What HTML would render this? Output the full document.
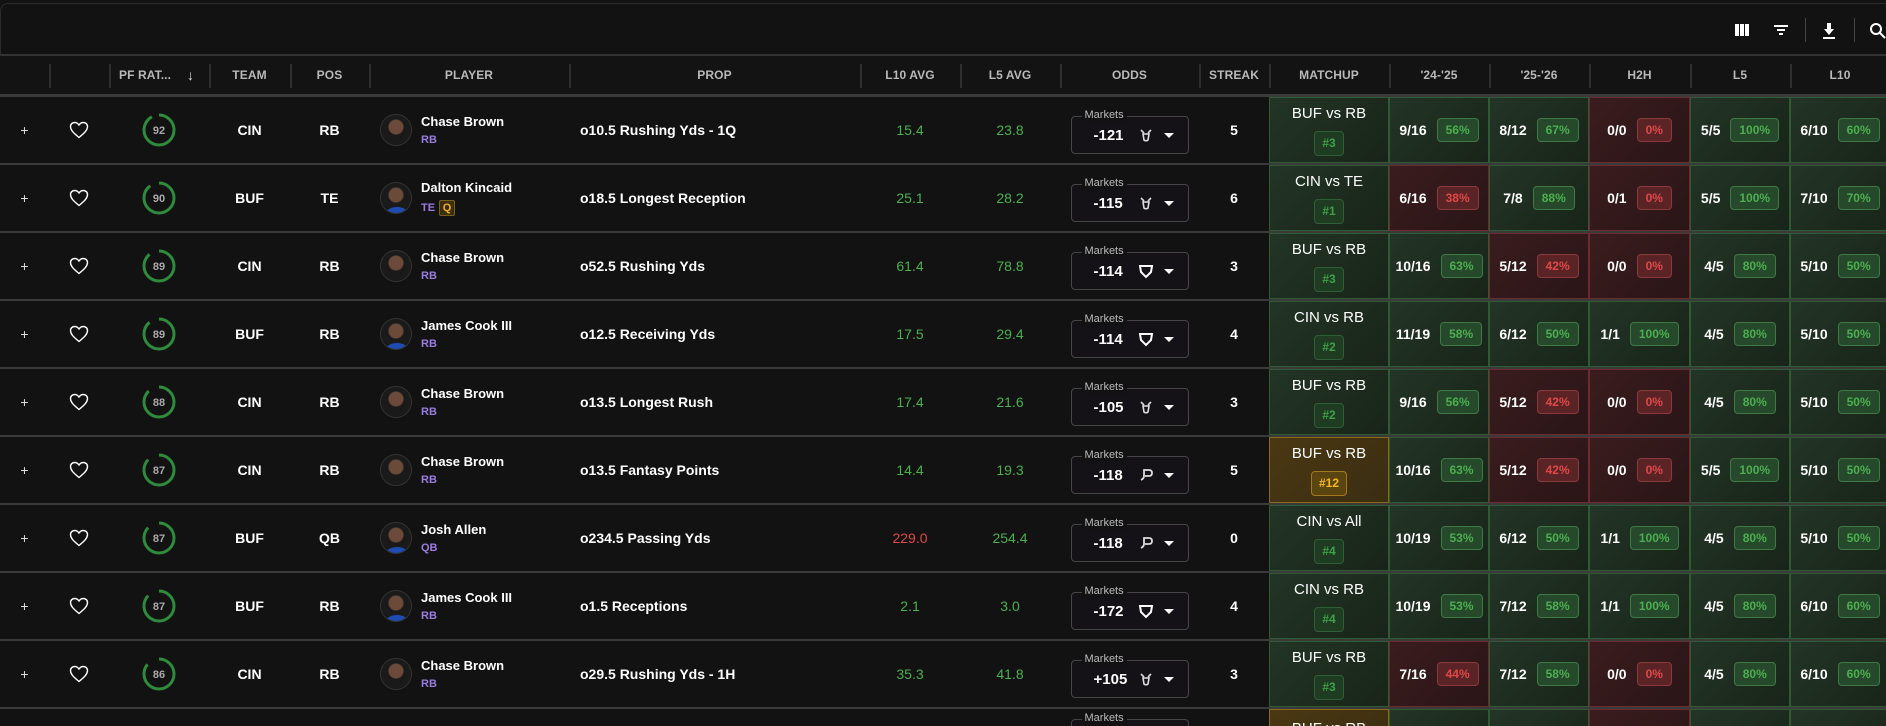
<!DOCTYPE html>
<html style="width:1886px;height:726px;overflow:hidden"><head><meta charset="utf-8"><style>
*{box-sizing:border-box;margin:0;padding:0}
body{width:1886px;height:726px;overflow:hidden;background:#121212;font-family:"Liberation Sans",sans-serif;color:#fff;position:relative}
.top{position:absolute;left:0;top:3px;width:1900px;height:53px;border:1px solid #2c2c2c;border-bottom:2px solid #333;border-radius:8px 8px 0 0;background:#121212}
.ic{position:absolute;top:18px}
.hdr{position:absolute;left:0;top:56px;width:1886px;height:41px;border-bottom:3px solid #3a3a3a;background:#131313}
.hdr div{position:absolute;top:0;height:38px;line-height:38px;text-align:center;font-size:12px;font-weight:bold;color:#b9b9b9;letter-spacing:0.1px}
.hdr i{position:absolute;top:8px;width:2px;height:24px;background:#2e2e2e}
.row{position:absolute;left:0;width:1886px;height:68px;border-bottom:2px solid #3a3a3a;background:#121212}
.row>div{position:absolute;top:0;height:66px;display:flex;align-items:center;justify-content:center;font-size:14px;font-weight:bold}
.c0{left:0;width:49px}.c1{left:49px;width:60px}.c2{left:109px;width:100px}.c3{left:209px;width:81px}.c4{left:290px;width:79px}
.c5{left:369px;width:200px;justify-content:flex-start!important}
.c6{left:569px;width:291px;justify-content:flex-start!important;padding-left:11px}
.c7{left:860px;width:100px}.c8{left:960px;width:100px}.c9{left:1060px;width:139px}.c10{left:1199px;width:70px}
.c11{left:1269px;width:120px}.c12{left:1389px;width:100px}.c13{left:1489px;width:100px}.c14{left:1589px;width:101px}.c15{left:1690px;width:100px}.c16{left:1790px;width:100px}
.avg{color:#4caf50!important;font-weight:normal!important;font-size:14px}
.red{color:#e04848!important}
.av{width:32px;height:32px;border-radius:50%;background:radial-gradient(circle at 50% 40%,#6b4a3a 0 7px,#1a1a1a 8px);border:1px solid #333;margin-left:11px;margin-right:9px;flex:none;position:relative;overflow:hidden}
.av.b::after{content:"";position:absolute;left:6px;bottom:-4px;width:20px;height:10px;border-radius:50%;background:#1f4cb0}
.nm{font-size:13px;font-weight:bold;line-height:16px}
.ps{font-size:11px;color:#9a7be0;font-weight:bold;margin-top:4px;display:flex;align-items:center}
.q{display:inline-block;margin-left:4px;width:16px;height:16px;line-height:14px;text-align:center;border:1px solid #7a5f1a;background:#3b2e0e;color:#f0b020;border-radius:2px;font-size:11px}
.odds{position:relative;width:118px;height:38px;border:1px solid #454545;border-radius:4px;background:#141216;margin-top:10px}
.odds .lb{position:absolute;left:10px;top:-8px;background:#121212;padding:0 3px;font-size:11px;color:#bbb;font-weight:normal;line-height:13px}
.odds .v{position:absolute;left:22px;top:10px;font-size:15px;font-weight:bold}
.odds .bk{position:absolute;left:66px;top:10px}
.odds .cr{position:absolute;left:92px;top:16px;width:0;height:0;border-left:5px solid transparent;border-right:5px solid transparent;border-top:5px solid #fff}
.g{background:linear-gradient(135deg,#233526,#182419);border:1px solid #2f5a33}
.r{background:linear-gradient(135deg,#3a1c1e,#2a1517);border:1px solid #6a2a2e}
.y{background:linear-gradient(135deg,#4a3812,#3a2d12);border:1px solid #8a6a1a}
.st{gap:10px;font-size:14px}
.pl{font-size:12px;font-weight:bold;padding:0 8px;height:24px;line-height:22px;border-radius:4px}
.pg{background:#26482b;border:1px solid #3f7a46;color:#4caf50}
.pr{background:#5a2427;border:1px solid #8a3a3f;color:#e04848}
.mu{flex-direction:column;font-weight:normal!important}
.mu span{font-size:15px;margin-top:0}
.bd{margin-top:9px;height:25px;line-height:23px;padding:0 7px;font-size:12px;font-weight:bold;border-radius:4px;background:#1f3c23;border:1px solid #2f5f34;color:#3fa048}
.bd.yb{background:#5a4410;border-color:#a07a20;color:#f5b820}
.plus{font-size:23px;font-weight:normal!important;color:#ddd}
</style></head><body>
<div class="top">
<svg class="ic" style="left:1733px" width="16" height="16" viewBox="0 0 16 16"><rect x="1" y="2" width="4" height="12" fill="#fff"/><rect x="6" y="2" width="4" height="12" fill="#fff"/><rect x="11" y="2" width="4" height="12" fill="#fff"/></svg>
<svg class="ic" style="left:1772px" width="16" height="16" viewBox="0 0 16 16"><rect x="1" y="3" width="14" height="2" fill="#fff"/><rect x="4" y="7" width="8" height="2" fill="#fff"/><rect x="6" y="11" width="4" height="2" fill="#fff"/></svg>
<div style="position:absolute;left:1804px;top:14px;width:1px;height:24px;background:#444"></div>
<svg class="ic" style="left:1820px" width="16" height="18" viewBox="0 0 16 18"><path d="M6 1h4v6h3l-5 6-5-6h3z" fill="#fff"/><rect x="2" y="15" width="12" height="2" fill="#fff"/></svg>
<div style="position:absolute;left:1853px;top:14px;width:1px;height:24px;background:#444"></div>
<svg class="ic" style="left:1868px" width="18" height="18" viewBox="0 0 18 18"><circle cx="7" cy="7" r="5" stroke="#fff" stroke-width="2" fill="none"/><path d="M11 11l5 5" stroke="#fff" stroke-width="2"/></svg>
</div>
<div class="hdr">
<i style="left:49px"></i><i style="left:109px"></i><i style="left:209px"></i><i style="left:290px"></i><i style="left:369px"></i><i style="left:569px"></i><i style="left:860px"></i><i style="left:960px"></i><i style="left:1060px"></i><i style="left:1199px"></i><i style="left:1269px"></i><i style="left:1389px"></i><i style="left:1489px"></i><i style="left:1589px"></i><i style="left:1690px"></i><i style="left:1790px"></i>
<div style="left:109px;width:100px;text-align:left;padding-left:10px">PF RAT...<span style="position:absolute;left:78px;font-size:14px;font-weight:normal;color:#ddd">&#8595;</span></div>
<div style="left:209px;width:81px">TEAM</div><div style="left:290px;width:79px">POS</div><div style="left:369px;width:200px">PLAYER</div><div style="left:569px;width:291px">PROP</div>
<div style="left:860px;width:100px">L10 AVG</div><div style="left:960px;width:100px">L5 AVG</div><div style="left:1060px;width:139px">ODDS</div><div style="left:1199px;width:70px">STREAK</div><div style="left:1269px;width:120px">MATCHUP</div>
<div style="left:1389px;width:100px">'24-'25</div><div style="left:1489px;width:100px">'25-'26</div><div style="left:1589px;width:101px">H2H</div><div style="left:1690px;width:100px">L5</div><div style="left:1790px;width:100px">L10</div>
</div>

<svg width="0" height="0" style="position:absolute"><defs>
<symbol id="dk" viewBox="0 0 16 16"><path d="M3 3l3 3M13 3l-3 3M5 7h6l-1 6c-1 1-3 1-4 0z" stroke="#ddd" stroke-width="1.6" fill="none"/></symbol>
<symbol id="fd" viewBox="0 0 16 16"><path d="M2 3h12l-1 6-5 5-5-5z" stroke="#fff" stroke-width="2" fill="none"/></symbol>
<symbol id="pp" viewBox="0 0 16 16"><path d="M3 13c2-1 3-2 3-4V3h5c2 0 3 1 3 3s-1 3-3 3H7" stroke="#ddd" stroke-width="1.8" fill="none"/></symbol>
<symbol id="hrt" viewBox="0 0 20 18"><path d="M10 16.5C4 11.5 1.5 9 1.5 5.5 1.5 3 3.5 1.5 5.7 1.5c1.8 0 3.3 1 4.3 2.5 1-1.5 2.5-2.5 4.3-2.5 2.2 0 4.2 1.5 4.2 4 0 3.5-2.5 6-8.5 11z" stroke="#fff" stroke-width="1.4" fill="none"/></symbol>
</defs></svg>

<div class="row" style="top:97px">
<div class="c0 plus">+</div><div class="c1"><svg width="20" height="18"><use href="#hrt"/></svg></div>
<div class="c2"><svg width="36" height="36" viewBox="0 0 36 36"><circle cx="18" cy="18" r="15" fill="none" stroke="#2f8a3c" stroke-width="3" stroke-dasharray="86.7 7.5" transform="rotate(-90 18 18)"/><text x="18" y="22" text-anchor="middle" font-size="11" fill="#aaa" font-family="Liberation Sans">92</text></svg></div>
<div class="c3">CIN</div><div class="c4">RB</div>
<div class="c5"><div class="av"></div><div><div class="nm">Chase Brown</div><div class="ps">RB</div></div></div>
<div class="c6">o10.5 Rushing Yds - 1Q</div><div class="c7 avg">15.4</div><div class="c8 avg">23.8</div>
<div class="c9"><div class="odds"><span class="lb">Markets</span><span class="v">-121</span><svg class="bk" width="16" height="16"><use href="#dk"/></svg><span class="cr"></span></div></div>
<div class="c10">5</div>
<div class="c11 g mu"><span>BUF vs RB</span><div class="bd">#3</div></div>
<div class="c12 g st">9/16<span class="pl pg">56%</span></div><div class="c13 g st">8/12<span class="pl pg">67%</span></div><div class="c14 r st">0/0<span class="pl pr">0%</span></div><div class="c15 g st">5/5<span class="pl pg">100%</span></div><div class="c16 g st">6/10<span class="pl pg">60%</span></div>
</div>

<div class="row" style="top:165px">
<div class="c0 plus">+</div><div class="c1"><svg width="20" height="18"><use href="#hrt"/></svg></div>
<div class="c2"><svg width="36" height="36" viewBox="0 0 36 36"><circle cx="18" cy="18" r="15" fill="none" stroke="#2f8a3c" stroke-width="3" stroke-dasharray="84.8 9.4" transform="rotate(-90 18 18)"/><text x="18" y="22" text-anchor="middle" font-size="11" fill="#aaa" font-family="Liberation Sans">90</text></svg></div>
<div class="c3">BUF</div><div class="c4">TE</div>
<div class="c5"><div class="av b"></div><div><div class="nm">Dalton Kincaid</div><div class="ps">TE<span class="q">Q</span></div></div></div>
<div class="c6">o18.5 Longest Reception</div><div class="c7 avg">25.1</div><div class="c8 avg">28.2</div>
<div class="c9"><div class="odds"><span class="lb">Markets</span><span class="v">-115</span><svg class="bk" width="16" height="16"><use href="#dk"/></svg><span class="cr"></span></div></div>
<div class="c10">6</div>
<div class="c11 g mu"><span>CIN vs TE</span><div class="bd">#1</div></div>
<div class="c12 r st">6/16<span class="pl pr">38%</span></div><div class="c13 g st">7/8<span class="pl pg">88%</span></div><div class="c14 r st">0/1<span class="pl pr">0%</span></div><div class="c15 g st">5/5<span class="pl pg">100%</span></div><div class="c16 g st">7/10<span class="pl pg">70%</span></div>
</div>

<div class="row" style="top:233px">
<div class="c0 plus">+</div><div class="c1"><svg width="20" height="18"><use href="#hrt"/></svg></div>
<div class="c2"><svg width="36" height="36" viewBox="0 0 36 36"><circle cx="18" cy="18" r="15" fill="none" stroke="#2f8a3c" stroke-width="3" stroke-dasharray="83.9 10.3" transform="rotate(-90 18 18)"/><text x="18" y="22" text-anchor="middle" font-size="11" fill="#aaa" font-family="Liberation Sans">89</text></svg></div>
<div class="c3">CIN</div><div class="c4">RB</div>
<div class="c5"><div class="av"></div><div><div class="nm">Chase Brown</div><div class="ps">RB</div></div></div>
<div class="c6">o52.5 Rushing Yds</div><div class="c7 avg">61.4</div><div class="c8 avg">78.8</div>
<div class="c9"><div class="odds"><span class="lb">Markets</span><span class="v">-114</span><svg class="bk" width="16" height="16"><use href="#fd"/></svg><span class="cr"></span></div></div>
<div class="c10">3</div>
<div class="c11 g mu"><span>BUF vs RB</span><div class="bd">#3</div></div>
<div class="c12 g st">10/16<span class="pl pg">63%</span></div><div class="c13 r st">5/12<span class="pl pr">42%</span></div><div class="c14 r st">0/0<span class="pl pr">0%</span></div><div class="c15 g st">4/5<span class="pl pg">80%</span></div><div class="c16 g st">5/10<span class="pl pg">50%</span></div>
</div>

<div class="row" style="top:301px">
<div class="c0 plus">+</div><div class="c1"><svg width="20" height="18"><use href="#hrt"/></svg></div>
<div class="c2"><svg width="36" height="36" viewBox="0 0 36 36"><circle cx="18" cy="18" r="15" fill="none" stroke="#2f8a3c" stroke-width="3" stroke-dasharray="83.9 10.3" transform="rotate(-90 18 18)"/><text x="18" y="22" text-anchor="middle" font-size="11" fill="#aaa" font-family="Liberation Sans">89</text></svg></div>
<div class="c3">BUF</div><div class="c4">RB</div>
<div class="c5"><div class="av b"></div><div><div class="nm">James Cook III</div><div class="ps">RB</div></div></div>
<div class="c6">o12.5 Receiving Yds</div><div class="c7 avg">17.5</div><div class="c8 avg">29.4</div>
<div class="c9"><div class="odds"><span class="lb">Markets</span><span class="v">-114</span><svg class="bk" width="16" height="16"><use href="#fd"/></svg><span class="cr"></span></div></div>
<div class="c10">4</div>
<div class="c11 g mu"><span>CIN vs RB</span><div class="bd">#2</div></div>
<div class="c12 g st">11/19<span class="pl pg">58%</span></div><div class="c13 g st">6/12<span class="pl pg">50%</span></div><div class="c14 g st">1/1<span class="pl pg">100%</span></div><div class="c15 g st">4/5<span class="pl pg">80%</span></div><div class="c16 g st">5/10<span class="pl pg">50%</span></div>
</div>

<div class="row" style="top:369px">
<div class="c0 plus">+</div><div class="c1"><svg width="20" height="18"><use href="#hrt"/></svg></div>
<div class="c2"><svg width="36" height="36" viewBox="0 0 36 36"><circle cx="18" cy="18" r="15" fill="none" stroke="#2f8a3c" stroke-width="3" stroke-dasharray="82.9 11.3" transform="rotate(-90 18 18)"/><text x="18" y="22" text-anchor="middle" font-size="11" fill="#aaa" font-family="Liberation Sans">88</text></svg></div>
<div class="c3">CIN</div><div class="c4">RB</div>
<div class="c5"><div class="av"></div><div><div class="nm">Chase Brown</div><div class="ps">RB</div></div></div>
<div class="c6">o13.5 Longest Rush</div><div class="c7 avg">17.4</div><div class="c8 avg">21.6</div>
<div class="c9"><div class="odds"><span class="lb">Markets</span><span class="v">-105</span><svg class="bk" width="16" height="16"><use href="#dk"/></svg><span class="cr"></span></div></div>
<div class="c10">3</div>
<div class="c11 g mu"><span>BUF vs RB</span><div class="bd">#2</div></div>
<div class="c12 g st">9/16<span class="pl pg">56%</span></div><div class="c13 r st">5/12<span class="pl pr">42%</span></div><div class="c14 r st">0/0<span class="pl pr">0%</span></div><div class="c15 g st">4/5<span class="pl pg">80%</span></div><div class="c16 g st">5/10<span class="pl pg">50%</span></div>
</div>

<div class="row" style="top:437px">
<div class="c0 plus">+</div><div class="c1"><svg width="20" height="18"><use href="#hrt"/></svg></div>
<div class="c2"><svg width="36" height="36" viewBox="0 0 36 36"><circle cx="18" cy="18" r="15" fill="none" stroke="#2f8a3c" stroke-width="3" stroke-dasharray="82 12.2" transform="rotate(-90 18 18)"/><text x="18" y="22" text-anchor="middle" font-size="11" fill="#aaa" font-family="Liberation Sans">87</text></svg></div>
<div class="c3">CIN</div><div class="c4">RB</div>
<div class="c5"><div class="av"></div><div><div class="nm">Chase Brown</div><div class="ps">RB</div></div></div>
<div class="c6">o13.5 Fantasy Points</div><div class="c7 avg">14.4</div><div class="c8 avg">19.3</div>
<div class="c9"><div class="odds"><span class="lb">Markets</span><span class="v">-118</span><svg class="bk" width="16" height="16"><use href="#pp"/></svg><span class="cr"></span></div></div>
<div class="c10">5</div>
<div class="c11 y mu"><span>BUF vs RB</span><div class="bd yb">#12</div></div>
<div class="c12 g st">10/16<span class="pl pg">63%</span></div><div class="c13 r st">5/12<span class="pl pr">42%</span></div><div class="c14 r st">0/0<span class="pl pr">0%</span></div><div class="c15 g st">5/5<span class="pl pg">100%</span></div><div class="c16 g st">5/10<span class="pl pg">50%</span></div>
</div>

<div class="row" style="top:505px">
<div class="c0 plus">+</div><div class="c1"><svg width="20" height="18"><use href="#hrt"/></svg></div>
<div class="c2"><svg width="36" height="36" viewBox="0 0 36 36"><circle cx="18" cy="18" r="15" fill="none" stroke="#2f8a3c" stroke-width="3" stroke-dasharray="82 12.2" transform="rotate(-90 18 18)"/><text x="18" y="22" text-anchor="middle" font-size="11" fill="#aaa" font-family="Liberation Sans">87</text></svg></div>
<div class="c3">BUF</div><div class="c4">QB</div>
<div class="c5"><div class="av b"></div><div><div class="nm">Josh Allen</div><div class="ps">QB</div></div></div>
<div class="c6">o234.5 Passing Yds</div><div class="c7 avg red">229.0</div><div class="c8 avg">254.4</div>
<div class="c9"><div class="odds"><span class="lb">Markets</span><span class="v">-118</span><svg class="bk" width="16" height="16"><use href="#pp"/></svg><span class="cr"></span></div></div>
<div class="c10">0</div>
<div class="c11 g mu"><span>CIN vs All</span><div class="bd">#4</div></div>
<div class="c12 g st">10/19<span class="pl pg">53%</span></div><div class="c13 g st">6/12<span class="pl pg">50%</span></div><div class="c14 g st">1/1<span class="pl pg">100%</span></div><div class="c15 g st">4/5<span class="pl pg">80%</span></div><div class="c16 g st">5/10<span class="pl pg">50%</span></div>
</div>

<div class="row" style="top:573px">
<div class="c0 plus">+</div><div class="c1"><svg width="20" height="18"><use href="#hrt"/></svg></div>
<div class="c2"><svg width="36" height="36" viewBox="0 0 36 36"><circle cx="18" cy="18" r="15" fill="none" stroke="#2f8a3c" stroke-width="3" stroke-dasharray="82 12.2" transform="rotate(-90 18 18)"/><text x="18" y="22" text-anchor="middle" font-size="11" fill="#aaa" font-family="Liberation Sans">87</text></svg></div>
<div class="c3">BUF</div><div class="c4">RB</div>
<div class="c5"><div class="av b"></div><div><div class="nm">James Cook III</div><div class="ps">RB</div></div></div>
<div class="c6">o1.5 Receptions</div><div class="c7 avg">2.1</div><div class="c8 avg">3.0</div>
<div class="c9"><div class="odds"><span class="lb">Markets</span><span class="v">-172</span><svg class="bk" width="16" height="16"><use href="#fd"/></svg><span class="cr"></span></div></div>
<div class="c10">4</div>
<div class="c11 g mu"><span>CIN vs RB</span><div class="bd">#4</div></div>
<div class="c12 g st">10/19<span class="pl pg">53%</span></div><div class="c13 g st">7/12<span class="pl pg">58%</span></div><div class="c14 g st">1/1<span class="pl pg">100%</span></div><div class="c15 g st">4/5<span class="pl pg">80%</span></div><div class="c16 g st">6/10<span class="pl pg">60%</span></div>
</div>

<div class="row" style="top:641px">
<div class="c0 plus">+</div><div class="c1"><svg width="20" height="18"><use href="#hrt"/></svg></div>
<div class="c2"><svg width="36" height="36" viewBox="0 0 36 36"><circle cx="18" cy="18" r="15" fill="none" stroke="#2f8a3c" stroke-width="3" stroke-dasharray="81 13.2" transform="rotate(-90 18 18)"/><text x="18" y="22" text-anchor="middle" font-size="11" fill="#aaa" font-family="Liberation Sans">86</text></svg></div>
<div class="c3">CIN</div><div class="c4">RB</div>
<div class="c5"><div class="av"></div><div><div class="nm">Chase Brown</div><div class="ps">RB</div></div></div>
<div class="c6">o29.5 Rushing Yds - 1H</div><div class="c7 avg">35.3</div><div class="c8 avg">41.8</div>
<div class="c9"><div class="odds"><span class="lb">Markets</span><span class="v">+105</span><svg class="bk" width="16" height="16"><use href="#dk"/></svg><span class="cr"></span></div></div>
<div class="c10">3</div>
<div class="c11 g mu"><span>BUF vs RB</span><div class="bd">#3</div></div>
<div class="c12 r st">7/16<span class="pl pr">44%</span></div><div class="c13 g st">7/12<span class="pl pg">58%</span></div><div class="c14 r st">0/0<span class="pl pr">0%</span></div><div class="c15 g st">4/5<span class="pl pg">80%</span></div><div class="c16 g st">6/10<span class="pl pg">60%</span></div>
</div>

<div class="row" style="top:709px">
<div class="c9" style="align-items:flex-start"><div class="odds"><span class="lb">Markets</span></div></div>
<div class="c11 y mu" style="justify-content:flex-start;padding-top:10px"><span>BUF vs RB</span></div>
<div class="c12 g st"></div><div class="c13 g st"></div><div class="c14 r st"></div><div class="c15 g st"></div><div class="c16 g st"></div>
</div>
</body></html>
